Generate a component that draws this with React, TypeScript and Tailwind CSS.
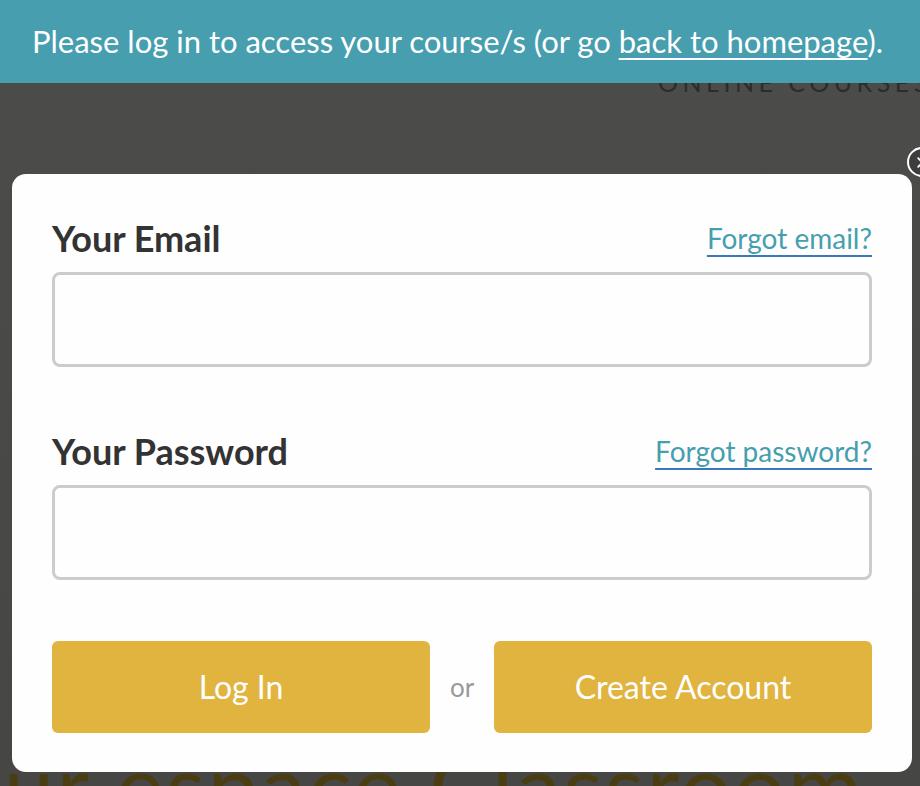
import { X } from "lucide-react";

const LATO = "font-['Lato','Liberation_Sans',sans-serif]";

export default function App() {
  return (
    <div className={`relative h-[786px] w-[920px] overflow-hidden bg-gradient-to-b from-[#4c4c4b] to-[#464645] ${LATO}`}>
      <div className="relative z-10 flex h-[83px] items-center bg-[#469eaf] pl-[32px] text-[31px] text-white">
        <p className="whitespace-nowrap">
          Please log in to access your course/s (or go{" "}
          <a href="#" className="underline decoration-2 underline-offset-[5px]">back to homepage</a>).
        </p>
      </div>

      <div className="-mt-[19px] pl-[658px]">
        <span className="whitespace-nowrap text-[25px] tracking-[0.18em] text-[#2c2c2c]">ONLINE COURSES</span>
      </div>

      <div className="absolute bottom-[-66px] left-[-50px] whitespace-nowrap text-[90px] tracking-[0.03em] text-[#4b3d12]">
        our espace Classroom
      </div>

      <div className="absolute left-[12px] top-[174px] h-[598px] w-[900px] rounded-[14px] bg-[#fefefe] px-[40px] pt-[44px]">
        <button className="absolute -right-[25px] -top-[27px] flex h-[30px] w-[30px] items-center justify-center rounded-full border-2 border-white bg-[#3d3d3d] text-white">
          <X size={17} strokeWidth={2.5} />
        </button>

        <Field label="Your Email" link="Forgot email?" type="email" />
        <div className="h-[64px]" />
        <Field label="Your Password" link="Forgot password?" type="password" />

        <div className="mt-[61px] flex items-center">
          <button className="h-[92px] w-[378px] rounded-[6px] bg-[#e0b43e] text-[32px] text-white">Log In</button>
          <span className="flex-1 text-center text-[26px] text-[#999]">or</span>
          <button className="h-[92px] w-[378px] rounded-[6px] bg-[#e0b43e] text-[32px] text-white">Create Account</button>
        </div>
      </div>
    </div>
  );
}

function Field({ label, link, type }: { label: string; link: string; type: string }) {
  return (
    <div>
      <div className="flex h-[40px] items-center justify-between">
        <label className="text-[36px] font-bold leading-none text-[#333]">{label}</label>
        <a href="#" className="text-[28px] leading-none text-[#469eaf] underline decoration-[#3a78be] decoration-2 underline-offset-[6px]">
          {link}
        </a>
      </div>
      <input
        type={type}
        className="mt-[14px] block h-[95px] w-full rounded-[8px] border-[3px] border-[#cccccc] bg-[#fefefe] px-4 text-[26px] outline-none"
      />
    </div>
  );
}
